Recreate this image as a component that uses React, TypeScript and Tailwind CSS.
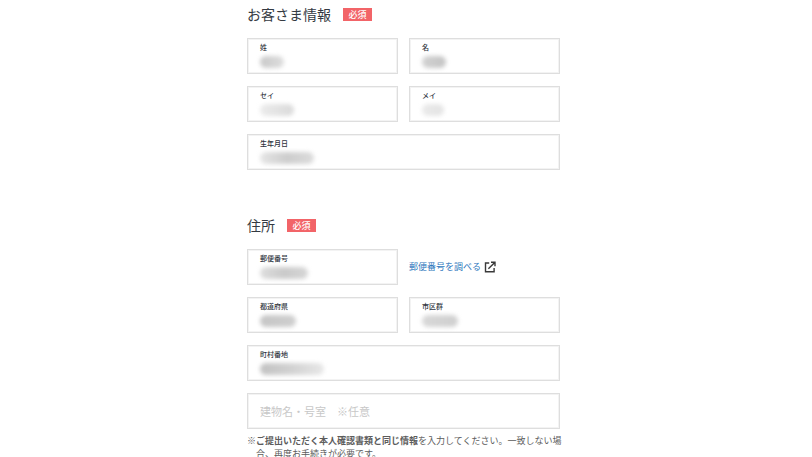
import { useId } from "react";
import clsx from "clsx";

type FieldProps = {
  label: string;
  mask: string;
  type?: string;
  wide?: boolean;
};

function Field({ label, mask, type = "text", wide }: FieldProps) {
  const id = useId();

  return (
    <div
      className={clsx(
        "h-9 border border-[#dedede] px-3 pt-1 ring-1 ring-[#f3f3f3] ring-inset",
        wide && "col-span-2"
      )}
    >
      <label
        htmlFor={id}
        className="block text-[7px] leading-[9px] font-medium text-[#2f353d]"
      >
        {label}
      </label>
      <div className="relative h-4">
        <input
          id={id}
          type={type}
          className="block h-full w-full bg-transparent text-[10px] outline-none"
        />
        <span
          aria-hidden="true"
          className={clsx(
            "pointer-events-none absolute top-1 left-0 h-3 rounded-full bg-linear-to-r blur-[2px]",
            mask
          )}
        />
      </div>
    </div>
  );
}

function SectionTitle({ children }: { children: string }) {
  return (
    <div className="flex items-center gap-3">
      <h2 className="text-[14px] leading-5 text-[#343a42]">{children}</h2>
      <span className="h-[13px] w-[29px] bg-[#f26468] text-center text-[9px] leading-[13px] font-medium text-white">
        必須
      </span>
    </div>
  );
}

function ExternalIcon() {
  return (
    <svg
      viewBox="0 0 12 12"
      className="size-3 shrink-0"
      fill="none"
      stroke="#3a3a3a"
      strokeWidth="1.4"
      aria-hidden="true"
    >
      <path d="M5.2 2H1.5v8.8h8.6V7" />
      <path d="M7 1.2h4v4M11 1.2 4.4 7.8" />
    </svg>
  );
}

export default function App() {
  return (
    <main className="h-screen overflow-hidden bg-white pr-[5px] font-['Noto_Sans_CJK_JP',sans-serif]">
      <form className="mx-auto max-w-[313px] pt-1">
        <section>
          <SectionTitle>お客さま情報</SectionTitle>
          <div className="mt-[14px] grid grid-cols-2 gap-x-[11px] gap-y-3">
            <Field label="姓" mask="w-6 from-[#c9c9c9] to-[#dedede]" />
            <Field label="名" mask="w-6 from-[#d2d2d2] to-[#c4c4c4]" />
            <Field label="セイ" mask="w-[34px] from-[#ececec] to-[#dadada]" />
            <Field label="メイ" mask="w-[22px] from-[#eaeaea] to-[#e4e4e4]" />
            <Field
              label="生年月日"
              mask="w-[54px] from-[#e6e6e6] via-[#cdcdcd] to-[#dcdcdc]"
              wide
            />
          </div>
        </section>

        <section className="mt-[45px]">
          <SectionTitle>住所</SectionTitle>
          <div className="mt-[14px] grid grid-cols-2 gap-x-[11px] gap-y-3">
            <Field
              label="郵便番号"
              mask="w-12 from-[#dedede] via-[#cacaca] to-[#d6d6d6]"
            />
            <a
              href="#zip"
              className="flex items-center gap-[3px] text-[9px] text-[#2f78bd]"
            >
              郵便番号を調べる
              <ExternalIcon />
            </a>
            <Field label="都道府県" mask="w-9 from-[#c6c6c6] to-[#cfcfcf]" />
            <Field label="市区群" mask="w-9 from-[#d8d8d8] to-[#cfcfcf]" />
            <Field
              label="町村番地"
              mask="w-16 from-[#c2c2c2] via-[#d2d2d2] to-[#e8e8e8]"
              wide
            />
            <input
              type="text"
              aria-label="建物名・号室"
              placeholder="建物名・号室　※任意"
              className="col-span-2 h-9 border border-[#dedede] px-3 text-[11px] ring-1 ring-[#f3f3f3] outline-none ring-inset placeholder:text-[#c8c8c8]"
            />
          </div>
          <p className="mt-[5px] -mr-1 pl-[9px] -indent-[9px] text-[9px] leading-[13px] text-[#5c5c5c]">
            ※<b>ご提出いただく本人確認書類と同じ情報</b>
            を入力してください。一致しない場合、再度お手続きが必要です。
          </p>
        </section>
      </form>
    </main>
  );
}
